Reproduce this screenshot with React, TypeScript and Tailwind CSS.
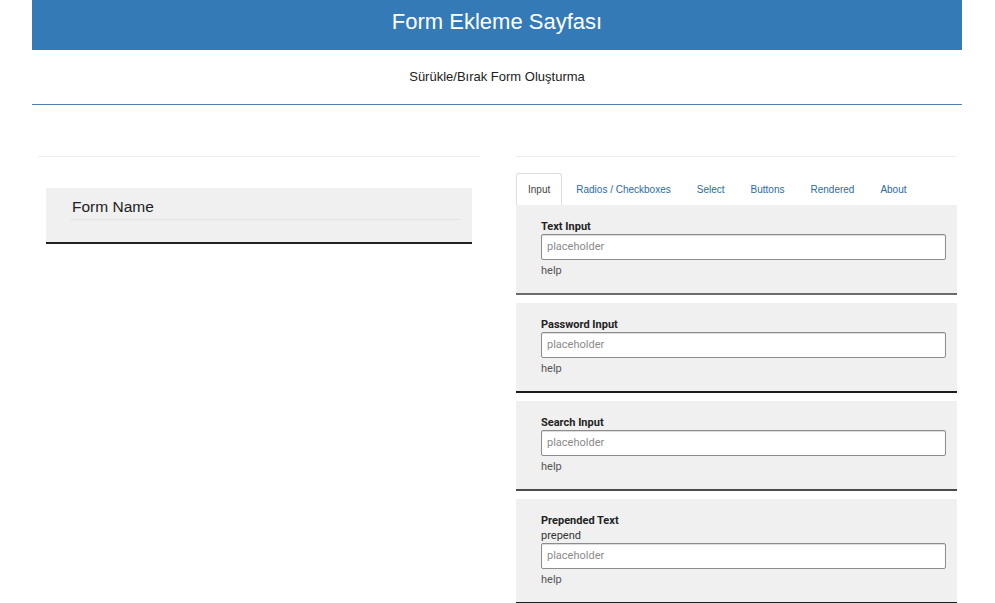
import React from 'react';

type Field = {
  label: string;
  prepend?: string;
  border: string;
};

const fields: Field[] = [
  { label: 'Text Input', border: 'border-[#6b6b6b]' },
  { label: 'Password Input', border: 'border-[#1c1c1c]' },
  { label: 'Search Input', border: 'border-[#4a4a4a]' },
  { label: 'Prepended Text', prepend: 'prepend', border: 'border-[#1c1c1c]' },
];

const tabs = ['Input', 'Radios / Checkboxes', 'Select', 'Buttons', 'Rendered', 'About'];

const FieldBlock: React.FC<{ field: Field }> = ({ field }) => (
  <div className={`bg-[#f0f0f0] border-b-2 ${field.border} pl-[25px] pr-[11px] pt-[15px] pb-[15px]`}>
    <div className="text-[11px] leading-[14px] font-bold text-[#222]">{field.label}</div>
    {field.prepend && <div className="text-[11px] leading-[15px] text-[#333]">{field.prepend}</div>}
    <div className="h-[26px] bg-white border border-[#8c8c8c] rounded-[2px] shadow-[inset_0_1px_1px_rgba(0,0,0,0.15)] flex items-center px-[5px]">
      <span className="text-[11px] text-[#8a8a8a]">placeholder</span>
    </div>
    <div className="mt-[4px] text-[11px] leading-[14px] text-[#555]">help</div>
  </div>
);

export default function App() {
  return (
    <div className="w-[995px] h-[603px] overflow-hidden bg-white font-['Liberation_Sans',Arial,sans-serif]">
      <div className="ml-[32px] w-[930px]">
        <div className="h-[50px] bg-[#337ab7] flex items-center justify-center pb-[6px]">
          <h1 className="text-white text-[22px] leading-none">Form Ekleme Sayfası</h1>
        </div>
        <div className="h-[55px] border-b border-[#4f7fae] flex items-center justify-center">
          <p className="text-[13px] text-[#222]">Sürükle/Bırak Form Oluşturma</p>
        </div>

        <div className="flex mt-[51px] pl-[6px] gap-[36px]">
          <div className="w-[442px]">
            <div className="border-t border-[#eeeeee]" />
            <div className="mt-[31px] mx-[8px] h-[56px] bg-[#f0f0f0] border-b-2 border-[#222] pl-[26px] pr-[12px] pt-[9px]">
              <div className="text-[15.5px] leading-[20px] text-[#222] pb-[2px] border-b border-[#e3e3e3] ml-[-2px] pl-[2px]">
                Form Name
              </div>
            </div>
          </div>

          <div className="w-[441px] font-['Roboto',Arial,sans-serif]">
            <div className="border-t border-[#eeeeee]" />
            <div className="mt-[16px] flex h-[32px] font-['Liberation_Sans',Arial,sans-serif] text-[10px]">
              {tabs.map((t, i) => (
                <div
                  key={t}
                  className={
                    i === 0
                      ? 'h-[32px] px-[11px] mr-[2px] flex items-center bg-white border border-b-0 border-[#dddddd] rounded-t-[3px] text-[#444]'
                      : 'h-[32px] px-[12px] mr-[2px] flex items-center text-[#2c6aa0]'
                  }
                >
                  {t}
                </div>
              ))}
            </div>
            <div className="flex flex-col gap-[8px]">
              {fields.map(f => (
                <FieldBlock key={f.label} field={f} />
              ))}
            </div>
          </div>
        </div>
      </div>
    </div>
  );
}
